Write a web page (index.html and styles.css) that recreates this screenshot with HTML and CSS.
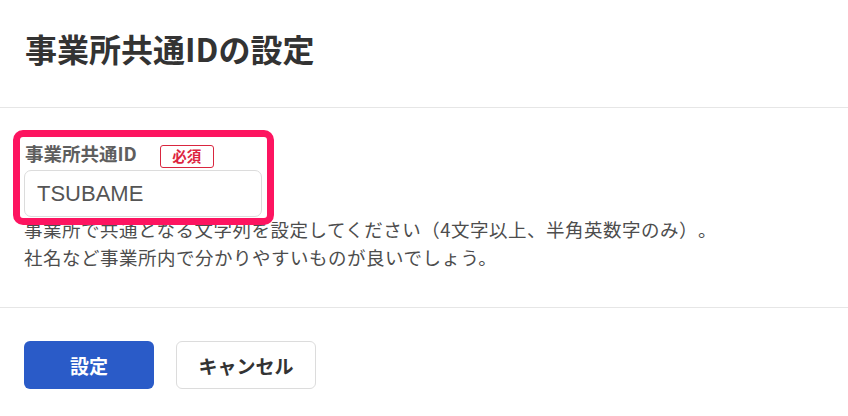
FILE: index.html
```html
<!DOCTYPE html>
<html lang="ja">
<head>
<meta charset="utf-8">
<title>事業所共通IDの設定</title>
<link rel="stylesheet" href="styles.css">
</head>
<body>
<div class="dialog">
  <header class="dialog-header">
    <h1 class="dialog-title">事業所共通IDの設定</h1>
  </header>
  <section class="dialog-body">
    <div class="field">
      <div class="field-label-row">
        <label class="field-label" for="office-id">事業所共通ID</label>
        <span class="badge-required">必須</span>
      </div>
      <input class="text-input" id="office-id" type="text" value="TSUBAME">
      <span class="highlight" aria-hidden="true"></span>
    </div>
    <p class="help-text">事業所で共通となる文字列を設定してください（4文字以上、半角英数字のみ）。<br>社名など事業所内で分かりやすいものが良いでしょう。</p>
  </section>
  <footer class="dialog-footer">
    <button class="btn btn-primary" type="button">設定</button>
    <button class="btn btn-secondary" type="button">キャンセル</button>
  </footer>
</div>
</body>
</html>
```

FILE: styles.css
```css
html, body {
  margin: 0;
  padding: 0;
  background: #ffffff;
}

body {
  font-family: "Noto Sans CJK JP", "Noto Sans", "Liberation Sans", sans-serif;
  color: #333333;
}

.dialog {
  width: 848px;
  height: 416px;
  overflow: hidden;
}

.dialog-header {
  padding: 24px 25px 35px;
  border-bottom: 1px solid #e6e6e6;
}

.dialog-title {
  margin: 0;
  font-size: 32px;
  line-height: 48px;
  font-weight: 700;
  color: #333333;
}

.dialog-body {
  padding: 33px 24px 36px;
  border-bottom: 1px solid #e6e6e6;
}

.field {
  position: relative;
  width: 238px;
}

.field-label-row {
  display: flex;
  align-items: flex-start;
  height: 27px;
}

.field-label {
  margin-left: 1px;
  font-size: 18.5px;
  line-height: 24px;
  font-weight: 700;
  color: #5e5e5e;
}

.badge-required {
  margin-top: 4px;
  margin-left: 23px;
  box-sizing: border-box;
  width: 54px;
  height: 23px;
  border: 1px solid #d9263f;
  border-radius: 3px;
  display: flex;
  align-items: center;
  justify-content: center;
  font-size: 14.5px;
  font-weight: 700;
  color: #dd2440;
  line-height: 1;
}

.text-input {
  display: block;
  margin: 2px 0 0;
  box-sizing: border-box;
  width: 238px;
  height: 47px;
  padding: 0 12px;
  border: 1px solid #dcdcdc;
  border-radius: 7px;
  font-family: "Liberation Sans", "Noto Sans", sans-serif;
  font-size: 22px;
  color: #555555;
  background: #ffffff;
  outline: none;
}

.highlight {
  position: absolute;
  top: -11px;
  left: -11px;
  right: -12px;
  bottom: -8px;
  border: 7px solid #fd1460;
  border-radius: 10px;
  z-index: 2;
  pointer-events: none;
}

.help-text {
  margin: -2px 0 0;
  font-size: 18.5px;
  line-height: 28px;
  font-weight: 400;
  letter-spacing: 0.5px;
  text-spacing-trim: space-all;
  color: #4d4d4d;
}

.dialog-footer {
  display: flex;
  gap: 22px;
  padding: 33px 24px;
}

.btn {
  box-sizing: border-box;
  height: 48px;
  border-radius: 6px;
  font-family: "Noto Sans CJK JP", "Noto Sans", sans-serif;
  font-size: 19px;
  font-weight: 700;
  cursor: pointer;
}

.btn-primary {
  width: 130px;
  border: none;
  background: #2a5bc8;
  color: #ffffff;
}

.btn-secondary {
  width: 140px;
  border: 1px solid #dcdcdc;
  background: #ffffff;
  color: #333333;
}
```
